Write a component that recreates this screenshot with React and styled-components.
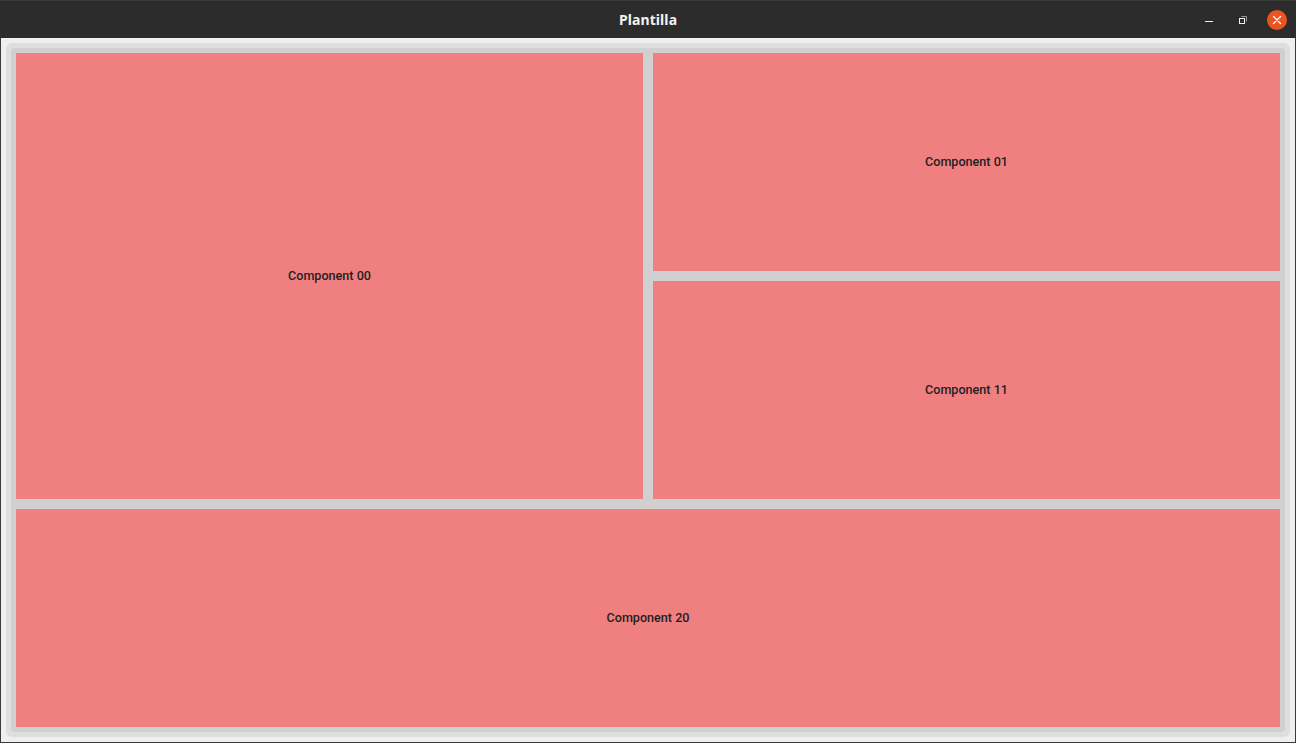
import styled, { createGlobalStyle } from "styled-components";

const GlobalStyle = createGlobalStyle`
  html, body {
    margin: 0;
    padding: 0;
    background: #2c2c2c;
  }
  * {
    box-sizing: border-box;
  }
`;

const Window = styled.div`
  width: 1296px;
  height: 743px;
  display: flex;
  flex-direction: column;
  overflow: hidden;
`;

const TitleBar = styled.div`
  height: 38px;
  flex-shrink: 0;
  background: #2c2c2c;
  border-top: 1px solid #3a3a3a;
  position: relative;
  display: flex;
  align-items: center;
  justify-content: center;
`;

const Title = styled.span`
  color: #f2f2f2;
  font-family: "Noto Sans", "DejaVu Sans", sans-serif;
  font-weight: 700;
  font-size: 14px;
  letter-spacing: 0.1px;
`;

const Controls = styled.div`
  position: absolute;
  right: 9px;
  top: 0;
  height: 100%;
  display: flex;
  align-items: center;
  gap: 14px;
`;

const ControlButton = styled.div`
  width: 20px;
  height: 20px;
  display: flex;
  align-items: center;
  justify-content: center;
  border-radius: 50%;
  background: ${(p) => (p.$close ? "#e95420" : "transparent")};
`;

const Body = styled.div`
  flex: 1;
  background: #efefef;
  border: 1px solid #3a3a3a;
  border-top: none;
  padding: 5px;
  display: flex;
`;

const OuterFrame = styled.div`
  flex: 1;
  background: #dedede;
  border-radius: 6px;
  padding: 5px;
  display: flex;
`;

const InnerFrame = styled.div`
  flex: 1;
  background: #d0d0d0;
  border-radius: 4px;
  padding: 5px;
  display: grid;
  grid-template-columns: 1fr 1fr;
  grid-template-rows: 1fr 1fr 1fr;
  gap: 10px;
`;

const Panel = styled.div`
  background: #f08080;
  display: flex;
  align-items: center;
  justify-content: center;
  padding-bottom: 2px;
  grid-row: ${(p) => p.$row};
  grid-column: ${(p) => p.$col};
  font-family: Roboto, "Liberation Sans", sans-serif;
  font-weight: 500;
  font-size: 12.6px;
  color: #1f1f1f;
`;

function MinimizeIcon() {
  return (
    <svg width="10" height="10" viewBox="0 0 10 10">
      <rect x="1" y="6" width="8" height="1" fill="#f2f2f2" />
    </svg>
  );
}

function RestoreIcon() {
  return (
    <svg width="10" height="10" viewBox="0 0 10 10">
      <rect x="1.5" y="3.5" width="5" height="5" fill="none" stroke="#f2f2f2" strokeWidth="1" />
      <path d="M3.5 1.5 H8.5 V6.5" fill="none" stroke="#9a9a9a" strokeWidth="1" />
    </svg>
  );
}

function CloseIcon() {
  return (
    <svg width="10" height="10" viewBox="0 0 10 10">
      <path d="M1.5 1.5 L8.5 8.5 M8.5 1.5 L1.5 8.5" stroke="#ffffff" strokeWidth="1.4" strokeLinecap="round" />
    </svg>
  );
}

export default function App() {
  return (
    <>
      <GlobalStyle />
      <Window>
        <TitleBar>
          <Title>Plantilla</Title>
          <Controls>
            <ControlButton>
              <MinimizeIcon />
            </ControlButton>
            <ControlButton>
              <RestoreIcon />
            </ControlButton>
            <ControlButton $close>
              <CloseIcon />
            </ControlButton>
          </Controls>
        </TitleBar>
        <Body>
          <OuterFrame>
            <InnerFrame>
              <Panel $row="1 / 3" $col="1">Component 00</Panel>
              <Panel $row="1" $col="2">Component 01</Panel>
              <Panel $row="2" $col="2">Component 11</Panel>
              <Panel $row="3" $col="1 / 3">Component 20</Panel>
            </InnerFrame>
          </OuterFrame>
        </Body>
      </Window>
    </>
  );
}
